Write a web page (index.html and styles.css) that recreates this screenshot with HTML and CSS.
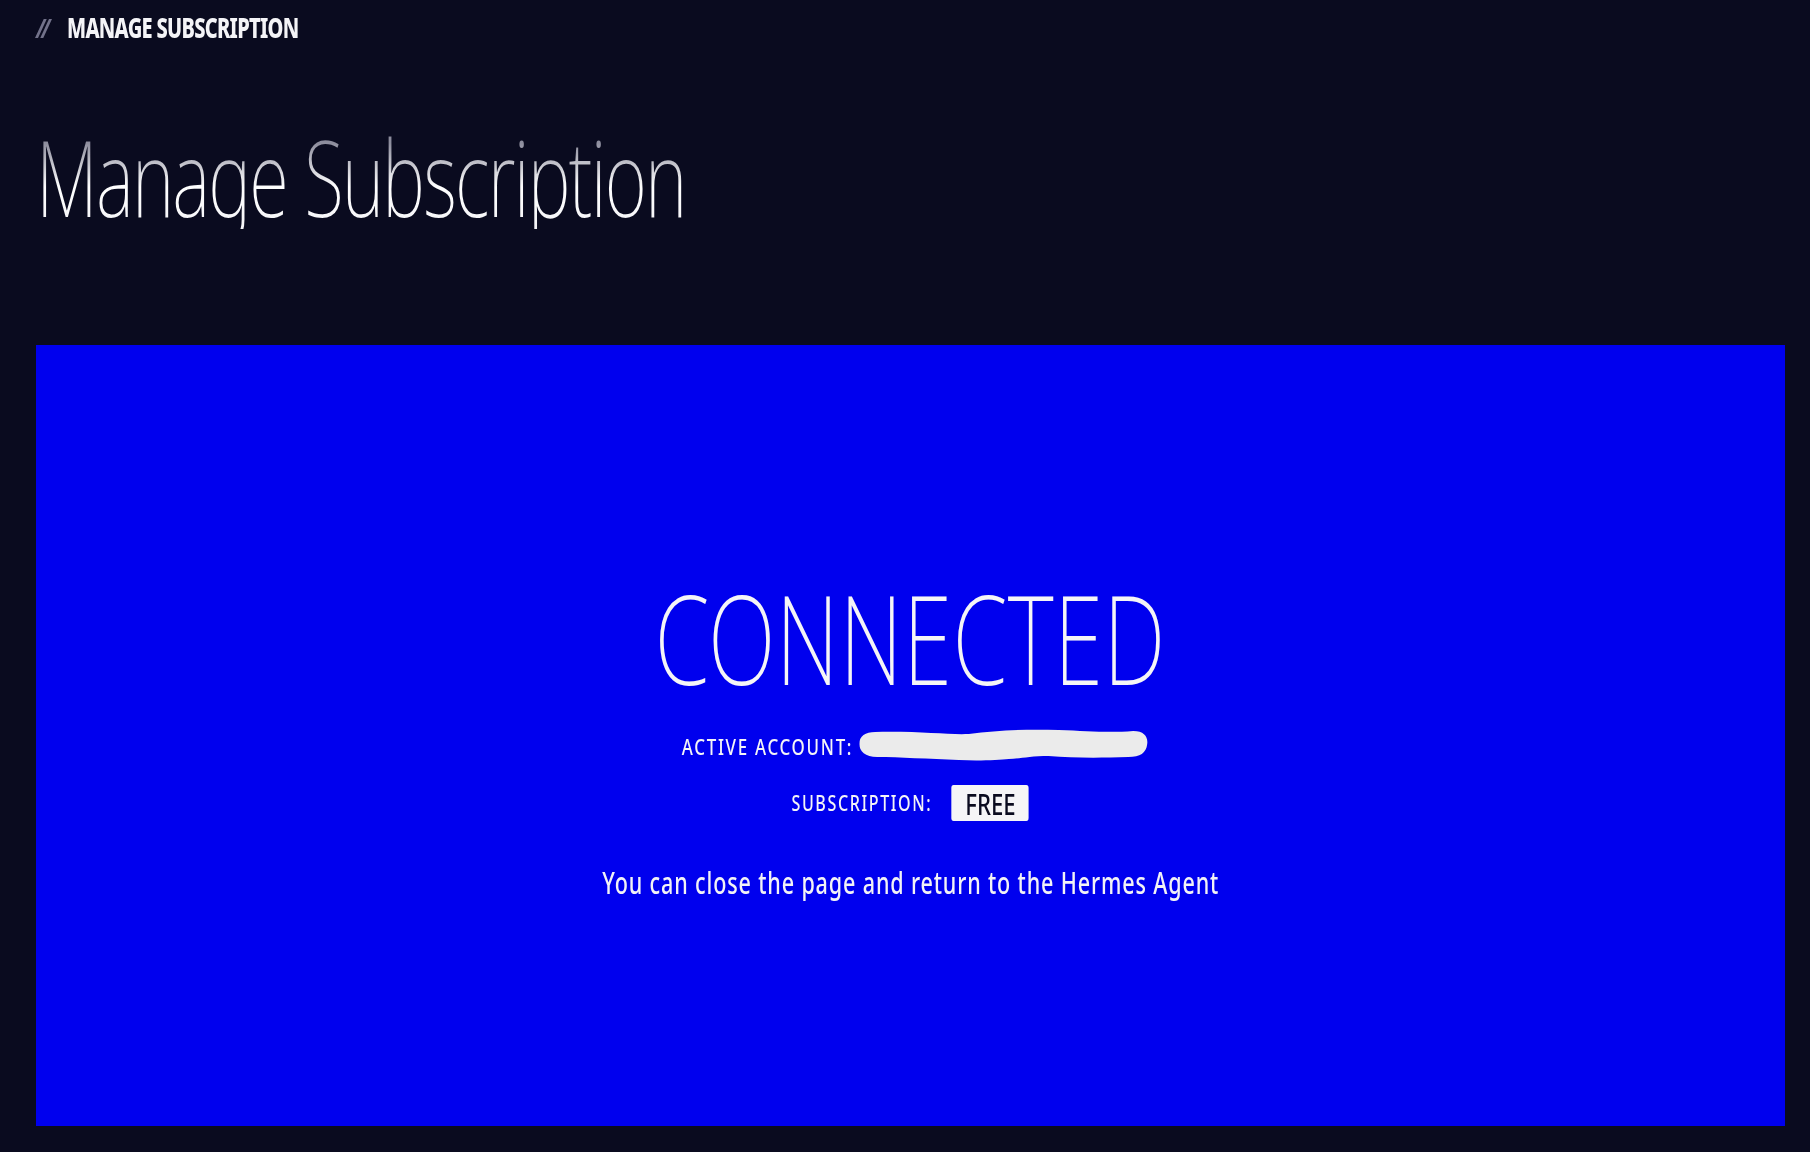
FILE: index.html
```html
<!DOCTYPE html>
<html lang="en">
<head>
<meta charset="utf-8">
<title>Manage Subscription</title>
<link rel="stylesheet" href="styles.css">
</head>
<body>
<div class="page">
  <div class="crumb"><span class="crumb-sep">//</span><span class="crumb-text">MANAGE SUBSCRIPTION</span></div>
  <h1 class="title">Manage Subscription</h1>
  <section class="panel">
    <div class="status">CONNECTED</div>
    <div class="row row-account">
      <span class="label">ACTIVE ACCOUNT:</span>
      <svg class="redacted" viewBox="0 0 290 34" preserveAspectRatio="none" aria-label="hidden email">
        <path d="M16,3 C60,2 90,6 110,5 C140,1 170,0 200,1 C230,2 250,4 275,2 C286,2 290,8 289,15 C288,24 282,28 270,28 C240,29 215,29 190,27 C170,27 160,30 150,30 C140,31 120,32 100,31 C70,30 40,28 18,28 C6,28 0,22 0,15 C0,7 6,3 16,3 Z" fill="#ebebeb"/>
      </svg>
    </div>
    <div class="row row-sub">
      <span class="label">SUBSCRIPTION:</span>
      <span class="badge">FREE</span>
    </div>
    <p class="note">You can close the page and return to the Hermes Agent</p>
  </section>
</div>
</body>
</html>
```
FILE: styles.css
```css
html, body {
  margin: 0;
  padding: 0;
  background: #0a0b1f;
}
body {
  font-family: "Noto Sans", "Liberation Sans", sans-serif;
  color: #f4f4f7;
}
.page {
  padding: 12px 25px 26px 36px;
}
.crumb {
  display: flex;
  align-items: baseline;
  font-size: 29px;
  line-height: 29px;
  height: 29px;
  font-weight: 800;
}
.crumb-sep {
  color: #72728a;
  font-weight: 700;
  font-size: 27px;
  width: 31px;
  letter-spacing: -0.18em;
  font-style: italic;
  display: inline-block;
  transform: scaleX(0.8);
  transform-origin: 0 50%;
}
.crumb-text {
  display: inline-block;
  color: #f4f4f7;
  letter-spacing: -0.035em;
  transform: scaleX(0.69);
  transform-origin: 0 50%;
  white-space: nowrap;
}
.title {
  margin: 83px 0 0 0;
  font-size: 105px;
  line-height: 105px;
  height: 105px;
  font-weight: 200;
  letter-spacing: -0.024em;
  background: linear-gradient(180deg, #8d8d9d 18%, #ffffff 60%, #f4f4f7 100%);
  -webkit-background-clip: text;
  background-clip: text;
  color: transparent;
  display: inline-block;
  white-space: nowrap;
  transform: scaleX(0.69);
  transform-origin: 0 50%;
}
.panel {
  margin-top: 116px;
  height: 781px;
  box-sizing: border-box;
  background: #0000ee;
  padding-top: 231px;
  display: flex;
  flex-direction: column;
  align-items: center;
}
.status {
  font-size: 123px;
  line-height: 123px;
  height: 123px;
  font-weight: 200;
  letter-spacing: 0.005em;
  color: #f5f5f7;
  white-space: nowrap;
  transform: scaleX(0.722);
}
.row {
  display: flex;
  align-items: center;
  white-space: nowrap;
}
.row-account {
  margin-top: 31px;
  height: 34px;
  padding-left: 11px;
  transform: scaleX(0.807);
}
.row-sub {
  margin-top: 21px;
  height: 36px;
  transform: scaleX(0.765);
}
.label {
  font-size: 21px;
  line-height: 21px;
  letter-spacing: 0.1em;
  font-weight: 500;
  color: #f4f4f7;
}
.row-account .label {
  margin-right: 8px;
}
.row-sub .label {
  margin-right: 25px;
}
.redacted {
  display: block;
  width: 358px;
  height: 34px;
  margin-top: -2px;
}
.badge {
  display: flex;
  align-items: center;
  height: 36px;
  box-sizing: border-box;
  padding: 0 17px 0 18px;
  background: #f5f5f7;
  color: #0a0b1f;
  border-radius: 3px;
  font-size: 29px;
  line-height: 29px;
  font-weight: 500;
}
.note {
  margin: 46px 0 0 0;
  font-size: 31px;
  line-height: 31px;
  letter-spacing: 0.04em;
  font-weight: 500;
  color: #f2f2f6;
  white-space: nowrap;
  transform: scaleX(0.695);
}
```
